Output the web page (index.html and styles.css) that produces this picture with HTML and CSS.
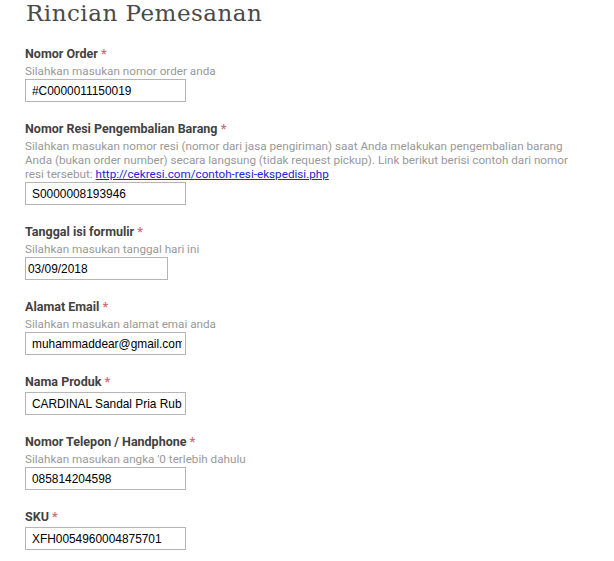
FILE: index.html
```html
<!DOCTYPE html>
<html lang="id">
<head>
<meta charset="utf-8">
<title>Rincian Pemesanan</title>
<link rel="stylesheet" href="styles.css">
</head>
<body>
<div class="form">
  <h2 class="title">Rincian Pemesanan</h2>

  <div class="field">
    <label class="label">Nomor Order <span class="req">*</span></label>
    <p class="desc">Silahkan masukan nomor order anda</p>
    <input class="input" type="text" value="#C0000011150019">
  </div>

  <div class="field">
    <label class="label">Nomor Resi Pengembalian Barang <span class="req">*</span></label>
    <p class="desc">Silahkan masukan nomor resi (nomor dari jasa pengiriman) saat Anda melakukan pengembalian barang Anda (bukan order number) secara langsung (tidak request pickup). Link berikut berisi contoh dari nomor resi tersebut: <a class="link" href="#">http://cekresi.com/contoh-resi-ekspedisi.php</a></p>
    <input class="input" type="text" value="S0000008193946">
  </div>

  <div class="field">
    <label class="label">Tanggal isi formulir <span class="req">*</span></label>
    <p class="desc">Silahkan masukan tanggal hari ini</p>
    <input class="input input-date" type="text" value="03/09/2018">
  </div>

  <div class="field">
    <label class="label">Alamat Email <span class="req">*</span></label>
    <p class="desc">Silahkan masukan alamat emai anda</p>
    <input class="input" type="text" value="muhammaddear@gmail.com">
  </div>

  <div class="field">
    <label class="label">Nama Produk <span class="req">*</span></label>
    <input class="input" type="text" value="CARDINAL Sandal Pria Rubber">
  </div>

  <div class="field">
    <label class="label">Nomor Telepon / Handphone <span class="req">*</span></label>
    <p class="desc">Silahkan masukan angka '0 terlebih dahulu</p>
    <input class="input" type="text" value="085814204598">
  </div>

  <div class="field">
    <label class="label">SKU <span class="req">*</span></label>
    <input class="input" type="text" value="XFH0054960004875701">
  </div>
</div>
</body>
</html>
```

FILE: styles.css
```css
html, body {
  margin: 0;
  padding: 0;
  background: #ffffff;
}

.form {
  width: 555px;
  padding: 0 0 0 25px;
  font-family: Roboto, "Liberation Sans", sans-serif;
}

.title {
  margin: 0;
  font-family: "DejaVu Serif", "Liberation Serif", serif;
  font-weight: normal;
  font-size: 23px;
  letter-spacing: 0.5px;
  line-height: 26px;
  color: #4a4a4a;
  padding-left: 1px;
}

.field {
  margin-top: 20px;
  display: flex;
  flex-direction: column;
  align-items: flex-start;
}

.field + .field {
  margin-top: 19px;
}

.label {
  display: block;
  font-size: 12.5px;
  font-weight: bold;
  line-height: 16px;
  color: #424242;
  margin-bottom: 2px;
}

.req {
  color: #cc6f78;
  font-weight: bold;
}

.desc {
  margin: 0 0 1px 0;
  font-size: 11.7px;
  line-height: 14px;
  color: #999999;
  width: 555px;
}

.link {
  color: #2424d0;
  text-decoration: underline;
}

.input {
  box-sizing: border-box;
  width: 161px;
  height: 23px;
  margin: 0;
  padding: 0 3px 0 6px;
  border: 1px solid #b5b5b5;
  border-radius: 0;
  background: #ffffff;
  font-family: "Liberation Sans", Arial, sans-serif;
  font-size: 11.9px;
  color: #000000;
  outline: none;
}

.input-date {
  width: 143px;
  padding-left: 2px;
}
```
